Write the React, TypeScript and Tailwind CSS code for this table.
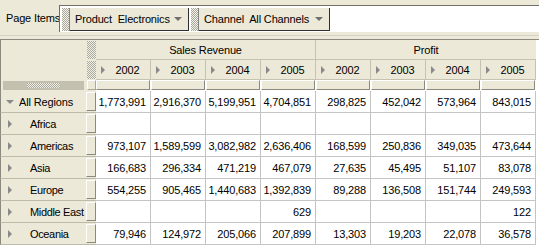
import React from 'react'

const YEARS = ['2002', '2003', '2004', '2005']

const ROWS = [
  { name: 'All Regions', top: true, v: ['1,773,991', '2,916,370', '5,199,951', '4,704,851', '298,825', '452,042', '573,964', '843,015'] },
  { name: 'Africa', v: ['', '', '', '', '', '', '', ''] },
  { name: 'Americas', v: ['973,107', '1,589,599', '3,082,982', '2,636,406', '168,599', '250,836', '349,035', '473,644'] },
  { name: 'Asia', v: ['166,683', '296,334', '471,219', '467,079', '27,635', '45,495', '51,107', '83,078'] },
  { name: 'Europe', v: ['554,255', '905,465', '1,440,683', '1,392,839', '89,288', '136,508', '151,744', '249,593'] },
  { name: 'Middle East', v: ['', '', '', '629', '', '', '', '122'] },
  { name: 'Oceania', v: ['79,946', '124,972', '205,066', '207,899', '13,303', '19,203', '22,078', '36,578'] },
]

// checker-dot gripper, like the old Swing/BI beans drag handles
function Grip({ className = '' }: { className?: string }) {
  return (
    <div className={`bg-[repeating-conic-gradient(#f2f1ea_0_25%,#a9a799_0_50%)] bg-[length:2px_2px] ${className}`} />
  )
}

function TriRight() {
  return <div className="w-0 h-0 border-y-[4px] border-y-transparent border-l-[4px] border-l-[#8a8a8a]" />
}

function TriDown({ color = 'border-t-[#8a8a8a]' }: { color?: string }) {
  return <div className={`w-0 h-0 border-x-[4px] border-x-transparent border-t-[4px] ${color}`} />
}

function PageItem({ label, value, w }: { label: string; value: string; w: string }) {
  return (
    <div className={`flex h-full ${w}`}>
      <Grip className="w-[8px] h-full border-r border-[#808080]" />
      <div className="flex-1 flex items-center bg-[#ece9d8] border-r border-b border-[#303030] pl-[5px] pr-[6px]">
        <span className="whitespace-pre pt-[1px]">{label}  {value}</span>
        <div className="ml-auto">
          <TriDown color="border-t-[#707070]" />
        </div>
      </div>
    </div>
  )
}

export default function App() {
  return (
    <div className="w-[539px] h-[248px] bg-white overflow-hidden whitespace-nowrap font-['Liberation_Sans',Arial,sans-serif] text-[11px] tracking-[-0.15px] text-black">
      {/* Page items toolbar */}
      <div className="h-[39px] bg-[#ece9d8] flex flex-col">
        <div className="h-[36px] flex border-b border-[#d6d3c6]">
          <div className="w-[59px] pl-[6px] pt-[1px] flex items-center">Page Items</div>
          <div className="flex-1 mt-[5px] mb-[3px] bg-white border-t border-l border-[#716f64] flex gap-[2px] pt-[2px] pl-[2px] pb-[1px]">
            <PageItem label="Product" value="Electronics" w="w-[127px]" />
            <PageItem label="Channel" value="All Channels" w="w-[139px]" />
          </div>
        </div>
      </div>

      {/* Crosstab */}
      <div className="grid grid-cols-[86px_10px_repeat(8,55px)] grid-rows-[20px_20px_11px_repeat(7,22px)] border-t border-[#8c8a7e] w-[539px] bg-white">
        {/* stub header */}
        <div className="row-span-2 bg-[#ece9d8] border-l border-[#8c8a7e]" />
        <div className="bg-[#ece9d8] p-[1px] pr-0">
          <Grip className="h-full" />
        </div>
        <div className="col-span-4 bg-[#ece9d8] border-r border-b border-[#c5c2b2] flex items-center justify-center pt-[2px]">Sales Revenue</div>
        <div className="col-span-4 bg-[#ece9d8] border-b border-[#c5c2b2] flex items-center justify-center pt-[2px]">Profit</div>

        <div className="bg-[#ece9d8] p-[1px] pr-0">
          <Grip className="h-full" />
        </div>
        {[...YEARS, ...YEARS].map((y, i) => (
          <div key={i} className="bg-[#ece9d8] border-r border-b border-[#c5c2b2] flex items-center pl-[5px]">
            <TriRight />
            <span className="flex-1 text-center pt-[2px]">{y}</span>
          </div>
        ))}

        {/* drag bar row */}
        <div className="bg-[#ece9d8] border-l border-[#8c8a7e] flex items-center pl-[2px] pr-[2px]">
          <div className="flex-1 h-[9px] bg-[#c3c0b0] flex justify-center items-center">
            <Grip className="w-[33px] h-[5px]" />
          </div>
        </div>
        <div className="bg-[#ece9d8] flex pl-[1px] pb-[1px]">
          <div className="flex-1 border-t border-l border-white border-r border-b border-r-[#aca899] border-b-[#aca899]" />
        </div>
        {[...YEARS, ...YEARS].map((y, i) => (
          <div key={'b' + y + i} className="bg-white flex pr-[1px] pb-[1px]">
            <div className="flex-1 bg-[#ece9d8] border-t border-l border-white border-r border-b border-r-[#8c8a7e] border-b-[#8c8a7e]" />
          </div>
        ))}

        {/* data rows */}
        {ROWS.map((r) => (
          <React.Fragment key={r.name}>
            <div className="bg-[#ece9d8] border-l border-b border-[#bebbab] border-l-[#8c8a7e] flex items-center overflow-hidden">
              {r.top ? (
                <div className="pl-[5px] flex items-center gap-[5px]">
                  <TriDown />
                  <span className="pt-[2px]">{r.name}</span>
                </div>
              ) : (
                <div className="pl-[7px] flex items-center">
                  <TriRight />
                  <span className="pl-[18px] pt-[2px] tracking-[-0.35px]">{r.name}</span>
                </div>
              )}
            </div>
            <div className="bg-[#ece9d8] border-b border-[#bebbab] flex py-[1px]">
              <div className="flex-1 border-l border-t border-white border-r border-b border-r-[#8c8a7e] border-b-[#8c8a7e]" />
            </div>
            {r.v.map((v, i) => (
              <div key={i} className="border-r border-b border-[#c4c4c4] flex items-center justify-end pr-[4px] pt-[2px]">
                {v}
              </div>
            ))}
          </React.Fragment>
        ))}
      </div>
    </div>
  )
}
